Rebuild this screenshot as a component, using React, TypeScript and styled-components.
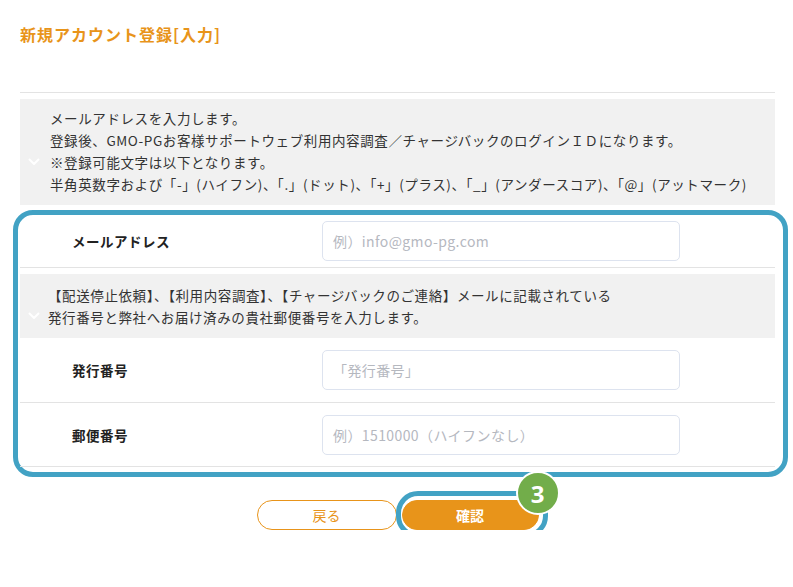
import React from 'react';
import styled, { createGlobalStyle } from 'styled-components';

const Global = createGlobalStyle`
  body {
    margin: 0;
    background: #fff;
    font-family: "Noto Sans CJK JP", "Noto Sans", sans-serif;
    color: #333;
  }
`;

const Page = styled.div`
  padding: 22px 18px 0 20px;
  width: 755px;
`;

const Title = styled.h1`
  font-size: 16px;
  font-weight: 700;
  color: #e8941a;
  margin: 0 0 46px 0;
  letter-spacing: 1px;
`;

const Rule = styled.div`
  border-top: 1px solid #e3e3e3;
`;

const Notice = styled.div<{ $pad?: string }>`
  position: relative;
  background: #f1f1f1;
  padding: ${(p) => p.$pad || '8px 20px 10px 30px'};
  font-size: 13.5px;
  letter-spacing: 0.6px;
  line-height: 22px;
  color: #333;
  margin-top: 6px;
`;

const Chevron = styled.span`
  position: absolute;
  left: 8px;
  top: 50%;
  margin-top: -4px;
  width: 10px;
  height: 6px;
`;

const Frame = styled.div`
  margin: 5px -13px 0 -7px;
  border: 5px solid #42a2c4;
  border-radius: 20px;
  padding: 0 8px 5px 2px;
`;

const Row = styled.div<{ $h: number }>`
  display: flex;
  align-items: center;
  height: ${(p) => p.$h}px;
  border-bottom: 1px solid #e3e3e3;
`;

const Label = styled.div`
  width: 302px;
  padding-left: 52px;
  box-sizing: border-box;
  font-size: 13.5px;
  letter-spacing: 0.5px;
  font-weight: 700;
  color: #222;
`;

const Input = styled.div`
  width: 358px;
  height: 40px;
  border: 1px solid #dde3ef;
  border-radius: 5px;
  box-sizing: border-box;
  padding-left: 10px;
  display: flex;
  align-items: center;
  font-size: 14px;
  letter-spacing: 0.4px;
  color: #b5b8bf;
`;

const Buttons = styled.div`
  display: flex;
  justify-content: center;
  gap: 5px;
  margin-top: 23px;
`;

const Btn = styled.div<{ $primary?: boolean }>`
  position: relative;
  width: ${(p) => (p.$primary ? 137 : 140)}px;
  height: 30px;
  box-sizing: border-box;
  border-radius: 15px;
  border: 1px solid #e8941a;
  background: ${(p) => (p.$primary ? '#e8941a' : '#fff')};
  color: ${(p) => (p.$primary ? '#fff' : '#e8941a')};
  font-weight: ${(p) => (p.$primary ? 700 : 400)};
  font-size: 14px;
  display: flex;
  align-items: center;
  justify-content: center;
`;

const Ring = styled.div`
  position: absolute;
  left: -7px;
  top: -10px;
  right: -10px;
  bottom: -9px;
  border: 5px solid #42a2c4;
  border-radius: 22px;
`;

const Badge = styled.div`
  position: absolute;
  right: -22px;
  top: -30px;
  width: 44px;
  height: 44px;
  border-radius: 50%;
  background: #72ad4a;
  border: 2px solid #fff;
  box-sizing: border-box;
  color: #fff;
  font-family: "Open Sans", sans-serif;
  font-weight: 700;
  font-size: 24px;
  display: flex;
  align-items: center;
  justify-content: center;
`;

const Down = () => (
  <Chevron>
    <svg width="12" height="7" viewBox="0 0 12 7">
      <path d="M1 1l5 5 5-5" fill="none" stroke="#fff" strokeWidth="2" />
    </svg>
  </Chevron>
);

export default function App() {
  return (
    <Page>
      <Global />
      <Title>新規アカウント登録[入力]</Title>
      <Rule />
      <Notice>
        <Down />
        メールアドレスを入力します。
        <br />
        登録後、GMO-PGお客様サポートウェブ利用内容調査／チャージバックのログインＩＤになります。
        <br />
        ※登録可能文字は以下となります。
        <br />
        　半角英数字および「-」(ハイフン)、「.」(ドット)、「+」(プラス)、「_」(アンダースコア)、「@」(アットマーク)
      </Notice>
      <Frame>
        <Row $h={52}>
          <Label>メールアドレス</Label>
          <Input>例）info@gmo-pg.com</Input>
        </Row>
        <Notice $pad="10px 20px 10px 28px">
          <Down />
          【配送停止依頼】、【利用内容調査】、【チャージバックのご連絡】メールに記載されている
          <br />
          発行番号と弊社へお届け済みの貴社郵便番号を入力します。
        </Notice>
        <Row $h={64}>
          <Label>発行番号</Label>
          <Input>「発行番号」</Input>
        </Row>
        <Row $h={63}>
          <Label>郵便番号</Label>
          <Input>例）1510000（ハイフンなし）</Input>
        </Row>
      </Frame>
      <Buttons>
        <Btn>戻る</Btn>
        <Btn $primary>
          確認
          <Ring />
          <Badge>3</Badge>
        </Btn>
      </Buttons>
    </Page>
  );
}
